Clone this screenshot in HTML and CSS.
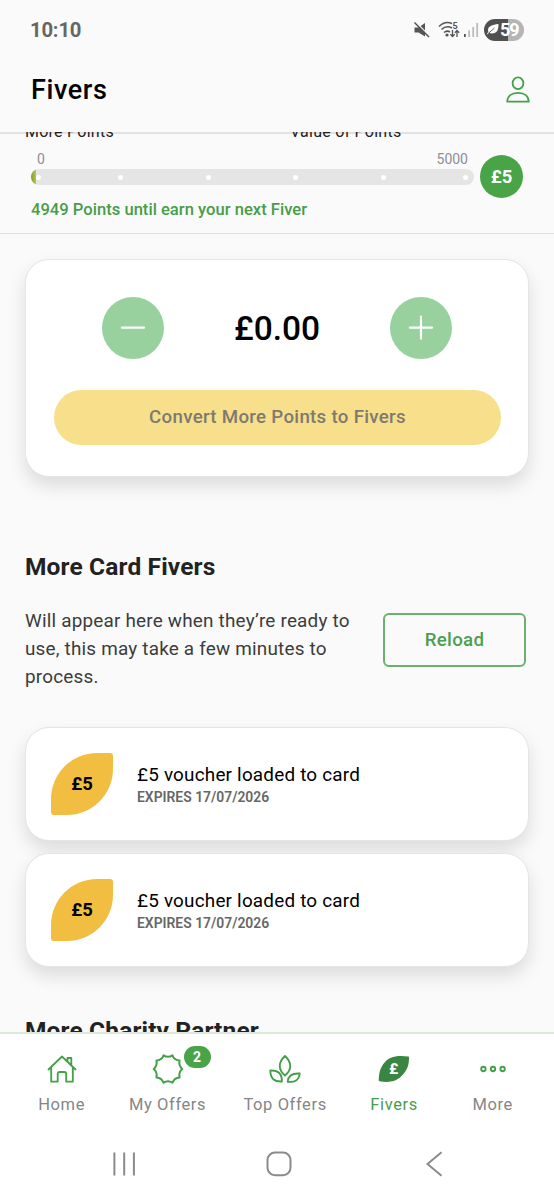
FILE: index.html
```html
<!DOCTYPE html>
<html lang="en">
<head>
<meta charset="utf-8">
<meta name="viewport" content="width=device-width">
<title>Fivers</title>
<link rel="stylesheet" href="styles.css">
</head>
<body>
<div class="phone">
  <div class="status">
    <span class="time">10:10</span>
    <div class="status-icons">
      <svg class="mute" width="18" height="18" viewBox="0 0 18 18"><path d="M1.500 6.500h4L12 2v13.500l-6.500-4h-4z" fill="#555"/><path d="M2 .5l15 15" stroke="#fafafa" stroke-width="1.500"/><path d="M1.500 1.500l14.500 14.500" stroke="#555" stroke-width="1.500"/></svg>
      <svg class="wifi" width="23" height="18" viewBox="0 0 23 18" fill="none" stroke="#555" stroke-width="1.600"><path d="M1 5.500Q7-.5 14 2.500M3.500 8.500Q8.500 4 14 7M6 11.500q3-2.500 6-.5"/><circle cx="9" cy="14" r=".8" fill="#555"/><path d="M14.500 9v6.500m-2.200-2.300 2.200 2.300 2.200-2.300M19 16V9.500m-2.200 2.300L19 9.500l2.200 2.300" stroke-width="1.300"/><text x="14.500" y="7.500" font-size="9" font-weight="700" font-family="Roboto, sans-serif" fill="#555" stroke="none">5</text></svg>
      <svg class="signal" width="15" height="16" viewBox="0 0 15 16"><path d="M0 12h1.800v3H0z" fill="#555"/><path d="M4.200 8.500H6V15H4.200zM8.300 5h1.800v10H8.300zM12.300 1h1.800v14h-1.800z" fill="#bbb"/></svg>
      <div class="battery">
        <svg width="12" height="11" viewBox="0 0 12 11"><path d="M11.500 0C11.500 6 10 9.500 5 9.500c-1 0-2-.3-2.600-.8L.8 10.400 0 9.600l1.400-1.700C-.2 3 4 .8 11.500 0z" fill="#fff"/><path d="M1 9.700 7.500 4" stroke="#555" stroke-width=".9"/></svg>
        <span>59</span>
      </div>
    </div>
  </div>
  <header class="header">
    <h1>Fivers</h1>
    <svg width="26" height="28" viewBox="0 0 26 28" fill="none" stroke="#43a047" stroke-width="1.800" stroke-linejoin="round"><ellipse cx="13" cy="7.300" rx="5.400" ry="5.900"/><path d="M2.300 25.700C2.300 20 6.500 16.800 13 16.800S23.700 20 23.700 25.700z"/></svg>
  </header>
  <section class="progress">
    <div class="columns"><span>More Points</span><span>Value of Points</span></div>
    <div class="meter-row">
      <div class="meter">
        <div class="scale"><span>0</span><span>5000</span></div>
        <div class="track"><i></i><i></i><i></i><i></i><i></i><i></i></div>
      </div>
      <div class="goal">£5</div>
    </div>
    <p class="until">4949 Points until earn your next Fiver</p>
  </section>
  <main>
    <section class="card convert">
      <div class="stepper">
        <button class="round" aria-label="Decrease"><svg width="26" height="26" viewBox="0 0 26 26"><path d="M2 12.700h22" stroke="#fff" stroke-width="2.200" stroke-linecap="round"/></svg></button>
        <span class="amount">£0.00</span>
        <button class="round" aria-label="Increase"><svg width="26" height="26" viewBox="0 0 26 26"><path d="M2 12.700h22M13 1.700v22" stroke="#fff" stroke-width="2.200" stroke-linecap="round"/></svg></button>
      </div>
      <button class="convert-button">Convert More Points to Fivers</button>
    </section>
    <h2>More Card Fivers</h2>
    <div class="reload-row">
      <p>Will appear here when they’re ready to<br>use, this may take a few minutes to<br>process.</p>
      <button class="reload">Reload</button>
    </div>
    <article class="card voucher">
      <div class="leaf">£5</div>
      <div class="details"><div class="title">£5 voucher loaded to card</div><div class="expires">EXPIRES 17/07/2026</div></div>
    </article>
    <article class="card voucher">
      <div class="leaf">£5</div>
      <div class="details"><div class="title">£5 voucher loaded to card</div><div class="expires">EXPIRES 17/07/2026</div></div>
    </article>
    <h2 class="charity">More Charity Partner</h2>
  </main>
  <nav class="tabs">
    <a class="home"><svg width="32" height="32" viewBox="0 0 32 32" fill="none" stroke="#43a047" stroke-width="1.800" stroke-linejoin="round" stroke-linecap="round"><path d="M2.500 16.500 16 3.500l13.500 13M5.200 14.500v14.200h6.500V21q0-2 2-2h4.500q2 0 2 2v7.700h6.600V14.500M21.500 8V5h3.800v7"/></svg><span>Home</span></a>
    <a class="offers"><svg width="32" height="32" viewBox="0 0 32 32" fill="none" stroke="#43a047" stroke-width="2" stroke-linejoin="round"><path d="M30.300 16Q26.300 19.300 27.600 24.400 22.400 24.700 20.400 29.600 16 26.700 11.600 29.600 9.600 24.700 4.400 24.400 5.700 19.300 1.700 16 5.700 12.700 4.400 7.600 9.600 7.300 11.600 2.400 16 5.300 20.400 2.400 22.400 7.300 27.600 7.600 26.300 12.700 30.300 16z"/></svg><b class="badge">2</b><span>My Offers</span></a>
    <a class="top"><svg width="34" height="32" viewBox="0 0 34 32" fill="none" stroke="#43a047" stroke-width="1.900" stroke-linejoin="round"><path d="M17 3C10 9.500 10 16.500 17 22.500 24 16.500 24 9.500 17 3zM2.300 17.500c8-.5 12 3.500 11.500 11C6.500 29 2.300 25.500 2.300 17.500zM31.700 20.500c-7.500-.5-11.500 2-12 8.200C26.500 29.700 31.200 27.200 31.700 20.500z"/></svg><span>Top Offers</span></a>
    <a class="fivers active"><svg width="32" height="32" viewBox="0 0 32 32"><path d="M31 4.500Q31.200 3.700 30.300 3.600C22 2.500 13 2.500 7 9 2 14.500 1 20 .7 27.300q0 .8.800 1C9.500 29.700 17 29.400 23 23.600 29.500 17.400 31 12 31 4.500z" fill="#398541"/><text x="16" y="21.300" text-anchor="middle" font-size="15.500" font-weight="800" font-family="Roboto, sans-serif" fill="#fff">£</text></svg><span>Fivers</span></a>
    <a class="more"><svg width="32" height="32" viewBox="0 0 32 32" fill="none" stroke="#43a047" stroke-width="1.900"><circle cx="6.400" cy="16" r="2.200"/><circle cx="16" cy="16" r="2.200"/><circle cx="25.600" cy="16" r="2.200"/></svg><span>More</span></a>
  </nav>
  <footer class="system">
    <svg width="26" height="26" viewBox="0 0 26 26" stroke="#8b8b8b" stroke-width="2"><path d="M3.400 1.500v23M13.200 1.500v23M22.900 1.500v23"/></svg>
    <svg width="26" height="26" viewBox="0 0 26 26" fill="none" stroke="#8b8b8b" stroke-width="2"><rect x="1.500" y="1.500" width="23" height="22.700" rx="7.500"/></svg>
    <svg width="26" height="26" viewBox="0 0 26 26" fill="none" stroke="#8b8b8b" stroke-width="2"><path d="M20.500 1.200 6.500 13l14 11.800"/></svg>
  </footer>
</div>
</body>
</html>
```
FILE: styles.css
```css
* { box-sizing: border-box; }
body { margin: 0; background: #fafafa; font-family: Roboto, "Liberation Sans", sans-serif; }
h1, h2, p { margin: 0; }
button { font-family: inherit; padding: 0; border: 0; }
svg { display: block; flex: none; }
.phone { width: 554px; height: 1200px; display: flex; flex-direction: column; overflow: hidden; }
.status { height: 60px; flex: none; display: flex; justify-content: space-between; padding: 0 30px 1px; align-items: center; color: #666; }
.time { font-size: 20.300px; font-weight: 700; letter-spacing: -.2px; }
.status-icons { display: flex; align-items: center; }
.wifi { margin-left: 7px; }
.signal { margin-left: 3px; }
.battery { margin-left: 5px; width: 40px; height: 22px; border-radius: 11px; background: linear-gradient(90deg, #505050 60%, #b5b5b5 60%); color: #fff; font-size: 18px; font-weight: 700; line-height: 22px; display: flex; align-items: center; padding-left: 3px; gap: 1px; letter-spacing: -1px; }
.header { height: 74px; flex: none; border-bottom: 2px solid #e2e2e2; display: flex; justify-content: space-between; padding: 14px 23px 0 31px; }
h1 { font-size: 27px; line-height: 33px; font-weight: 500; letter-spacing: .6px; color: #000; }
.header svg { margin-top: 2px; }
.progress { height: 102px; margin-top: -2px; flex: none; border-bottom: 1.500px solid #e0e0e0; overflow: hidden; }
.columns { display: grid; grid-template-columns: 265px 1fr; padding-left: 25px; height: 20px; margin-top: -10px; margin-bottom: -1px; font-size: 16px; line-height: 20px; letter-spacing: .25px; color: #222; }
.meter-row { display: flex; padding-left: 31px; gap: 6px; height: 59px; }
.meter { width: 443px; }
.scale { height: 28px; display: flex; justify-content: space-between; padding: 8px 6px 0; font-size: 14px; line-height: 20px; color: #8e8e98; }
.track { height: 16px; border-radius: 8px; background: linear-gradient(90deg, #7b9d29 0, #b9c551 5px, #e5e5e5 5px); display: flex; align-items: center; justify-content: space-between; padding: 0 6px 0 5px; }
.track i { width: 5px; height: 5px; border-radius: 50%; background: #fff; }
.track i:first-child { margin-right: -5px; }
.track i:last-child { margin-left: -5px; }
.goal { width: 43px; height: 43px; margin-top: 14px; border-radius: 50%; background: #49a347; color: #fff; font-weight: 700; font-size: 18.500px; line-height: 44px; text-align: center; }
.until { padding-left: 31px; font-size: 16.600px; line-height: 20px; font-weight: 500; color: #489d48; }
main { height: 798px; flex: none; overflow: hidden; padding: 25px 25px 0; }
.card { background: #fff; border: 1.500px solid #e5e5e5; border-radius: 24px; box-shadow: 0 9px 18px rgba(0,0,0,.12); }
.convert { height: 218px; padding: 37px 27px 0; }
.stepper { display: flex; justify-content: space-between; align-items: center; padding: 0 49px; height: 62px; }
.round { width: 62px; height: 62px; border-radius: 50%; background: #98d09e; display: flex; align-items: center; justify-content: center; }
.amount { font-size: 33.500px; font-weight: 500; color: #000; }
.convert-button { display: block; width: 447px; height: 55px; margin: 31px 0 0 1px; padding-bottom: 2px; border-radius: 28px; background: #f8df8b; color: #7d7a70; font-size: 18.700px; font-weight: 500; letter-spacing: .3px; }
h2 { font-size: 24.500px; line-height: 30px; font-weight: 700; letter-spacing: .15px; color: #222; margin-top: 75px; }
.reload-row { display: flex; justify-content: space-between; margin-top: 25px; padding-right: 3px; }
.reload-row p { font-size: 18.900px; line-height: 27.800px; color: #3c3c3c; white-space: nowrap; letter-spacing: .2px; }
.reload { width: 143px; height: 54px; margin-top: 6px; border: 2px solid #6bb16d; border-radius: 6px; background: transparent; color: #4c9f50; font-size: 18.700px; font-weight: 500; letter-spacing: .3px; }
.voucher { height: 114px; display: flex; padding: 25px 0 0 25px; gap: 24px; }
.reload-row + .voucher { margin-top: 37px; }
.voucher + .voucher { margin-top: 12px; }
.leaf { width: 62px; height: 62px; border-radius: 46px 3px 46px 3px; background: #f1be42; text-align: center; line-height: 62px; font-size: 18.500px; font-weight: 700; color: #000; }
.details { padding-top: 10px; color: #000; }
.title { font-size: 18.900px; line-height: 24px; letter-spacing: .2px; }
.expires { font-size: 13.900px; line-height: 20px; font-weight: 600; color: #666; }
.charity { margin-top: 49px; }
.tabs { height: 95px; flex: none; background: #fff; border-top: 2px solid #dce9da; display: grid; grid-template-columns: 106px 106px 129px 89px 108px; padding: 19px 7px 0 8.600px; }
.tabs a { position: relative; display: flex; flex-direction: column; align-items: center; gap: 9px; color: #868686; font-size: 16.500px; line-height: 22px; letter-spacing: .6px; white-space: nowrap; }
.tabs .active { color: #489d48; }
.badge { position: absolute; left: 69px; top: -7px; width: 27px; height: 22px; border-radius: 11px; background: #49a347; color: #fff; font-size: 14px; line-height: 22px; text-align: center; letter-spacing: 0; }
.system { flex: 1; background: #fff; display: flex; justify-content: space-between; padding: 24px 107px 0 111px; }
```
